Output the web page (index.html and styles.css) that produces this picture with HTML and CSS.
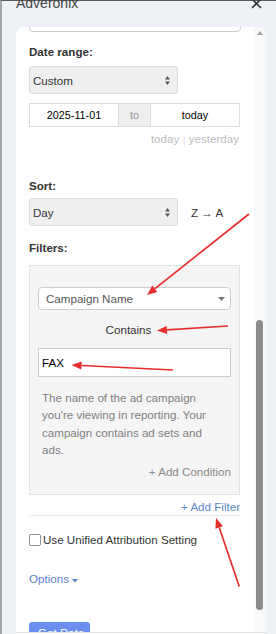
FILE: index.html
```html
<!DOCTYPE html>
<html lang="en">
<head>
<meta charset="utf-8"/>
<meta content="width=device-width, initial-scale=1.0" name="viewport"/>
<title>Adveronix</title>
<link rel="stylesheet" href="styles.css">
</head>
<body>
<div class="frame">
  <div class="topbar">
    <span class="brand">Adveronix</span>
    <svg class="close" width="11" height="11" viewBox="0 0 11 11"><path d="M1 1L10 10M10 1L1 10" stroke="#333" stroke-width="1.6" fill="none"/></svg>
  </div>
  <div class="card">
    <div class="scroller">
      <div class="pane">
        <div class="prev"></div>
        <div class="label">Date range:</div>
        <div class="select">
          <span>Custom</span>
          <svg width="5" height="9" viewBox="0 0 5 9"><path d="M0 3.5L2.5 0L5 3.5ZM0 5.5L2.5 9L5 5.5Z" fill="#555"/></svg>
        </div>
        <div class="daterow">
          <div class="date-in">2025-11-01</div>
          <div class="addon">to</div>
          <div class="date-in">today</div>
        </div>
        <div class="quick">today <span class="sep">|</span> yesterday</div>
        <div class="label sort">Sort:</div>
        <div class="sortrow">
          <div class="select">
            <span>Day</span>
            <svg width="5" height="9" viewBox="0 0 5 9"><path d="M0 3.5L2.5 0L5 3.5ZM0 5.5L2.5 9L5 5.5Z" fill="#555"/></svg>
          </div>
          <span class="order">Z → A</span>
        </div>
        <div class="label filters">Filters:</div>
        <div class="filterbox">
          <div class="field">
            <span>Campaign Name</span>
            <svg width="7" height="4" viewBox="0 0 7 4"><path d="M0 0L7 0L3.5 4Z" fill="#777"/></svg>
          </div>
          <div class="op">Contains</div>
          <div class="value">FAX</div>
          <div class="help">The name of the ad campaign you're viewing in reporting. Your campaign contains ad sets and ads.</div>
          <div class="addcond">+ Add Condition</div>
        </div>
        <div class="addfilter">+ Add Filter</div>
        <div class="rule"></div>
        <div class="check">
          <span class="box"></span>
          <span>Use Unified Attribution Setting</span>
        </div>
        <div class="options">Options <svg width="6" height="4" viewBox="0 0 6 4"><path d="M0 0L6 0L3 3.5Z" fill="#5b80cd"/></svg></div>
        <div class="getdata">Get Data</div>
      </div>
      <div class="scrollbar">
        <span class="sb-up"></span>
        <span class="sb-thumb"></span>
      </div>
    </div>
  </div>
</div>
<svg class="marks" width="276" height="634" viewBox="0 0 276 634">
  <g stroke="#e52f2f" stroke-width="1.7" fill="#e52f2f">
    <line x1="249" y1="214" x2="155" y2="288.6"/>
    <polygon points="147,295 152.3,285.6 157.3,291.9" stroke="none"/>
    <line x1="228" y1="326" x2="167" y2="329.9"/>
    <polygon points="157,330.5 166.7,325.9 167.2,333.9" stroke="none"/>
    <line x1="173" y1="370" x2="81.5" y2="365.5"/>
    <polygon points="71.5,365 81.7,361.5 81.3,369.5" stroke="none"/>
    <line x1="239.3" y1="586.5" x2="219.2" y2="527.5"/>
    <polygon points="216,518 223,526.2 215.4,528.8" stroke="none"/>
  </g>
</svg>
</body>
</html>
```

FILE: styles.css
```css
* {
  box-sizing: border-box;
}
body {
  position: relative;
  margin: 0;
  width: 276px;
  height: 634px;
  overflow: hidden;
  font-family: "Liberation Sans", Arial, sans-serif;
  font-size: 11.6px;
  color: #333;
  background: #eef2f7;
}
.frame {
  height: 634px;
  border-top: 1px solid #5a5a5a;
  border-left: 2px solid #a6a6a6;
  padding-left: 14px;
}
.topbar {
  display: flex;
  justify-content: space-between;
  align-items: flex-start;
  height: 26px;
  padding-right: 14px;
}
.brand {
  font-size: 14px;
  line-height: 14px;
  margin-top: -5px;
  color: #444;
}
.close {
  margin-top: -3px;
}
.card {
  width: 250px;
  height: 612px;
  background: #fff;
  border-radius: 8px 8px 0 0;
  overflow: hidden;
}
.scroller {
  display: flex;
  height: 606px;
  border-bottom: 1px solid #e2e2e2;
  overflow: hidden;
}
.pane {
  flex: 1;
  padding: 0 14px 0 13px;
}
.scrollbar {
  width: 12px;
  background: #f9f9f9;
  padding-left: 2px;
}
.sb-up {
  display: block;
  width: 0;
  height: 0;
  margin: 4px 0 0 1px;
  border-left: 3px solid transparent;
  border-right: 3px solid transparent;
  border-bottom: 4px solid #a3a3a3;
}
.sb-thumb {
  display: block;
  width: 7px;
  height: 290px;
  margin-top: 285px;
  background: #8b8b8b;
  border-radius: 4px;
}
.prev {
  height: 28px;
  margin-top: -23px;
  margin-right: -1px;
  border: 1px solid #ccc;
  border-radius: 4px;
}
.label {
  font-weight: bold;
  line-height: 16px;
  margin-top: 12px;
}
.label.sort {
  margin-top: 31px;
}
.label.filters {
  margin-top: 14px;
}
.select {
  display: flex;
  align-items: center;
  justify-content: space-between;
  width: 149px;
  height: 28px;
  margin-top: 6px;
  padding: 0 7px 0 3px;
  background: #efefef;
  border: 1px solid #ddd;
  border-radius: 3px;
}
.daterow {
  display: flex;
  height: 24px;
  margin-top: 9px;
  font-size: 10.8px;
  line-height: 22px;
  text-align: center;
}
.date-in {
  width: 90px;
  border: 1px solid #ddd;
  color: #000;
}
.addon {
  width: 31px;
  background: #eee;
  border-top: 1px solid #ddd;
  border-bottom: 1px solid #ddd;
  color: #999;
}
.quick {
  margin-top: 4px;
  line-height: 16px;
  text-align: right;
  padding-right: 1px;
  color: #bdbdbd;
}
.quick .sep {
  color: #e2e2e2;
}
.sortrow {
  display: flex;
  align-items: center;
  gap: 13px;
}
.sortrow .select {
  margin-top: 4px;
}
.order {
  margin-top: 4px;
  color: #333;
}
.filterbox {
  margin-top: 9px;
  padding: 21px 8px 14px;
  background: #f5f5f5;
  border: 1px solid #e3e3e3;
}
.field {
  display: flex;
  align-items: center;
  justify-content: space-between;
  height: 23px;
  padding: 0 5px 0 7px;
  background: #fff;
  border: 1px solid #ccc;
  border-radius: 4px;
  color: #555;
}
.op {
  margin-top: 11.5px;
  line-height: 16px;
  text-align: center;
  padding-right: 12px;
  color: #333;
}
.value {
  height: 29px;
  margin-top: 10.5px;
  padding-left: 3px;
  line-height: 27px;
  background: #fff;
  border: 1px solid #ccc;
  color: #000;
}
.help {
  margin-top: 12px;
  padding: 0 8px 0 4px;
  line-height: 17.4px;
  color: #808080;
}
.addcond {
  margin-top: 5px;
  line-height: 16px;
  text-align: right;
  color: #8a8a8a;
}
.addfilter {
  margin-top: 4px;
  line-height: 16px;
  text-align: right;
  color: #5b87c7;
}
.rule {
  border-top: 1px solid #e6e6e6;
}
.check {
  display: flex;
  align-items: center;
  gap: 2px;
  margin-top: 16px;
  line-height: 16px;
}
.box {
  width: 12px;
  height: 12px;
  background: #fff;
  border: 1px solid #909090;
  border-radius: 2px;
}
.options {
  margin-top: 23px;
  line-height: 16px;
  color: #5b80cd;
}
.getdata {
  width: 61px;
  height: 28px;
  margin-top: 35px;
  padding-left: 9px;
  line-height: 21px;
  background: #6b8ff0;
  border-radius: 3px;
  color: #fff;
}
.marks {
  position: absolute;
  top: 0;
  left: 0;
  pointer-events: none;
}
```
